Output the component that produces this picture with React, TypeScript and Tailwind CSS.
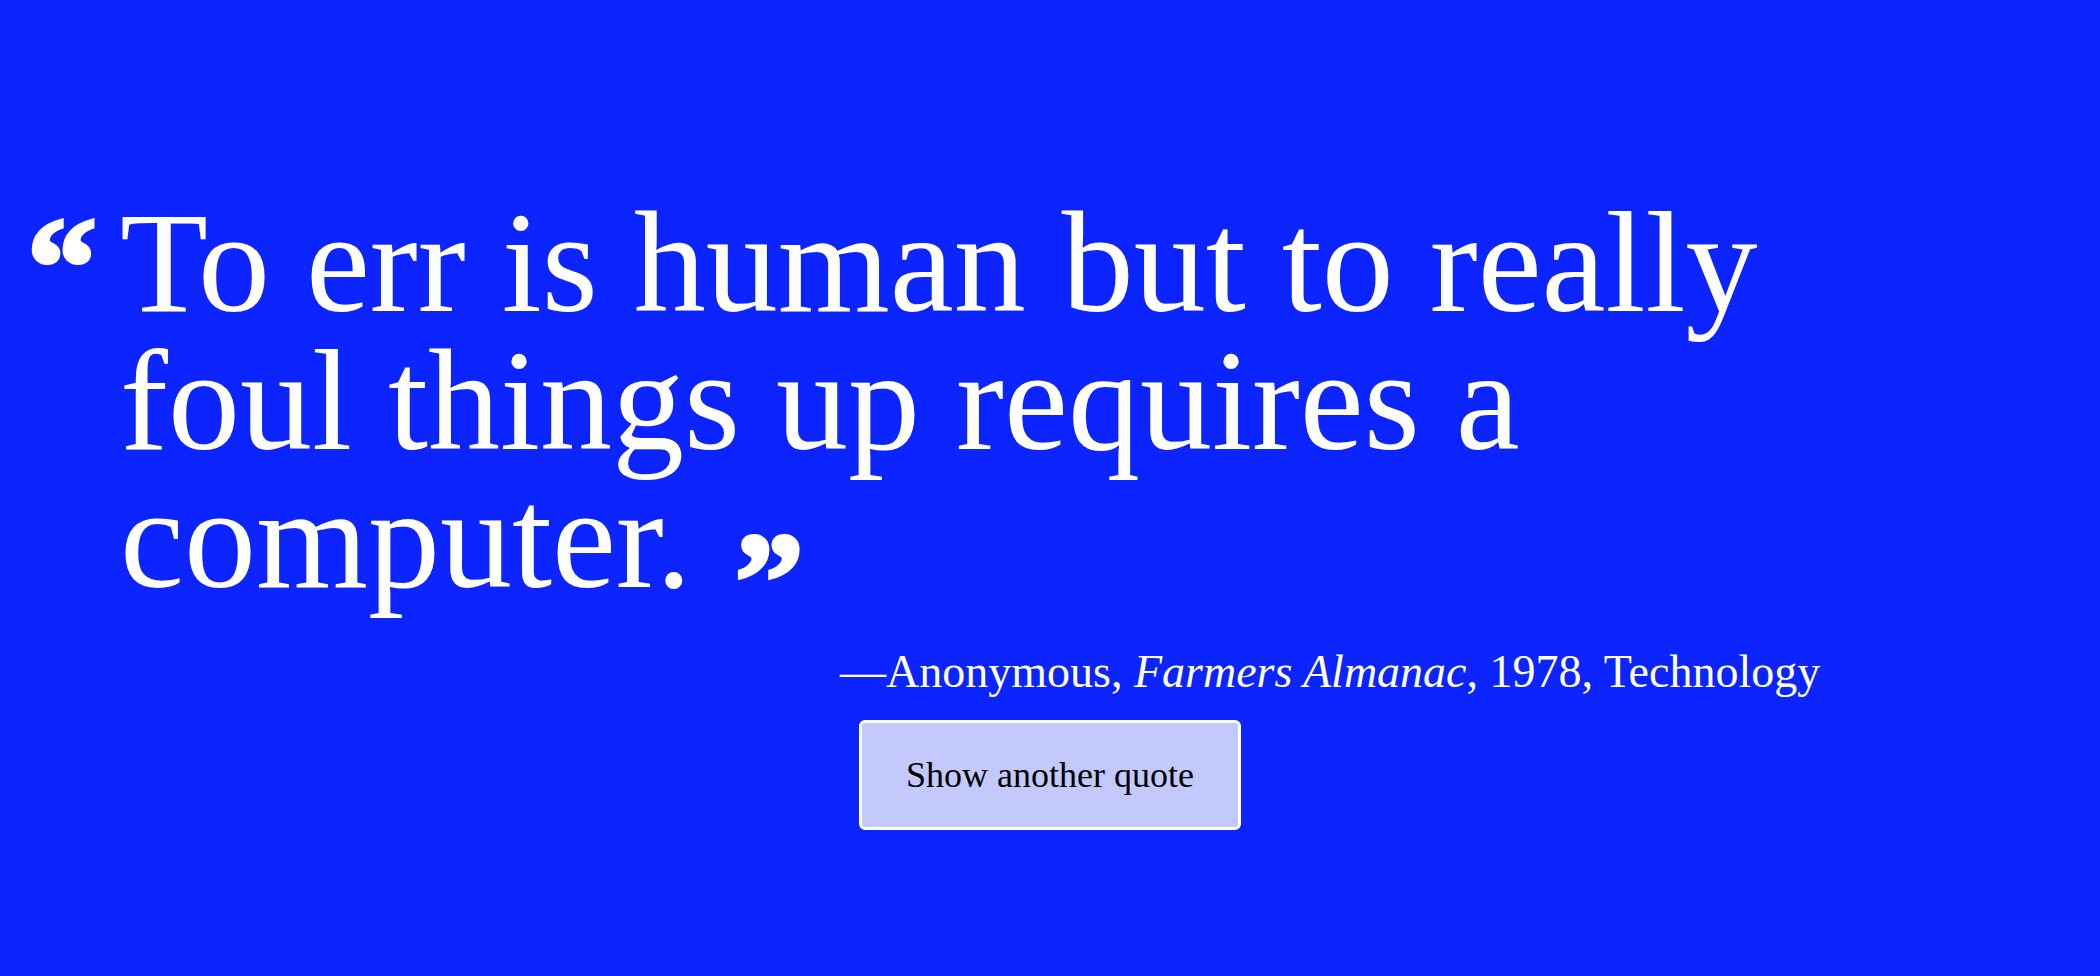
const SERIF = "font-['Liberation_Serif','Times_New_Roman',serif]";

export default function App() {
  return (
    <div className={`min-h-screen w-full bg-[#0c24ff] text-white ${SERIF}`}>
      <div className="pt-[194px]">
        {/* Quote, with hanging open mark and trailing close mark */}
        <div className="flex items-start pl-[27px]">
          <span className="mt-[3px] w-[93px] shrink-0 text-[140px] font-bold leading-none [-webkit-text-stroke:4px_white]">
            “
          </span>
          <p className="max-w-[1720px] text-[144px] leading-[138px] after:ml-[43px] after:inline-block after:align-[-41px] after:text-[138px] after:font-bold after:leading-[0] after:content-['”'] after:[-webkit-text-stroke:4px_white]">
            To err is human but to really foul things up requires a computer.
          </p>
        </div>

        {/* Attribution */}
        <p className="mt-[29px] pl-[40%] text-[46px] leading-[1.5]">
          —Anonymous, <em className="italic">Farmers Almanac</em>, 1978, Technology
        </p>

        {/* Action */}
        <div className="mt-[14px] flex justify-center">
          <button
            type="button"
            className="h-[110px] w-[382px] cursor-pointer rounded-md border-[3px] border-white bg-[#c3c8fd] text-[36px] text-black"
          >
            Show another quote
          </button>
        </div>
      </div>
    </div>
  );
}
